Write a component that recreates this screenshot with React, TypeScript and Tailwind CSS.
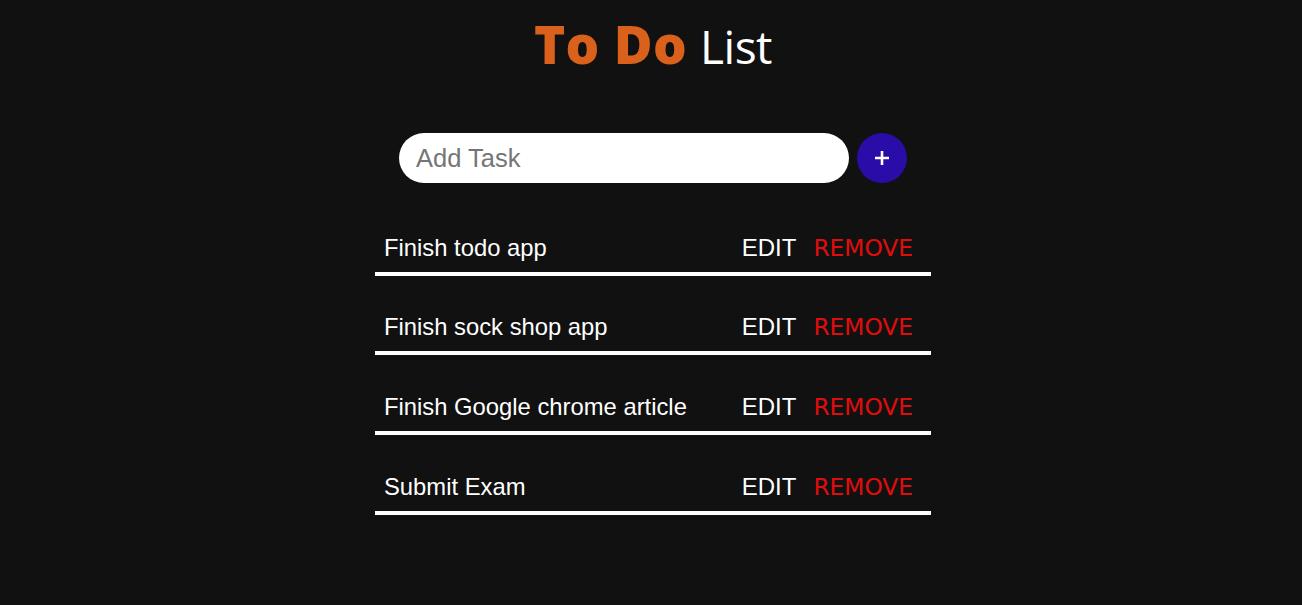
import React from "react";

const tasks = [
  "Finish todo app",
  "Finish sock shop app",
  "Finish Google chrome article",
  "Submit Exam",
];

export default function App() {
  return (
    <div className="min-h-[605px] w-full bg-[#111111] pl-[4px] flex flex-col items-center">
      <h1
        className="mt-[12px] text-[50px] leading-[64px] text-white"
        style={{ fontFamily: '"Open Sans", sans-serif' }}
      >
        <span className="text-[53px] font-extrabold tracking-[0.3px] text-[#d9611b]">To Do</span>{" "}
        <span className="text-[46px] font-normal tracking-[-0.5px]">List</span>
      </h1>
      <div className="mt-[55px] flex items-center gap-[8px]">
        <input
          autoFocus
          placeholder="Add Task"
          className="h-[50px] w-[450px] rounded-[25px] bg-white pl-[17px] text-[25.5px] text-black caret-black placeholder:text-[#757575] outline-none"
          style={{ fontFamily: '"Liberation Sans", Arial, sans-serif' }}
        />
        <button className="flex h-[50px] w-[50px] items-center justify-center rounded-full bg-[#2a0ca8]">
          <svg width="16" height="16" viewBox="0 0 16 16">
            <path d="M8 1v14M1 8h14" stroke="white" strokeWidth="2.6" />
          </svg>
        </button>
      </div>
      <ul className="mt-[13px] w-[556px]" style={{ fontFamily: '"Liberation Sans", Arial, sans-serif' }}>
        {tasks.map((t) => (
          <li
            key={t}
            className="flex h-[79.67px] items-end justify-between border-b-[4px] border-white pb-[10px] pl-[9px] pr-[18px]"
          >
            <span className="text-[23.8px] leading-[28px] text-white">{t}</span>
            <div className="flex items-center gap-[17px]">
              <span className="text-[24px] leading-[28px] text-white">EDIT</span>
              <span
                className="text-[23.3px] leading-[28px] text-[#e00d0d]"
                style={{ fontFamily: '"DejaVu Sans", sans-serif' }}
              >
                REMOVE
              </span>
            </div>
          </li>
        ))}
      </ul>
    </div>
  );
}
